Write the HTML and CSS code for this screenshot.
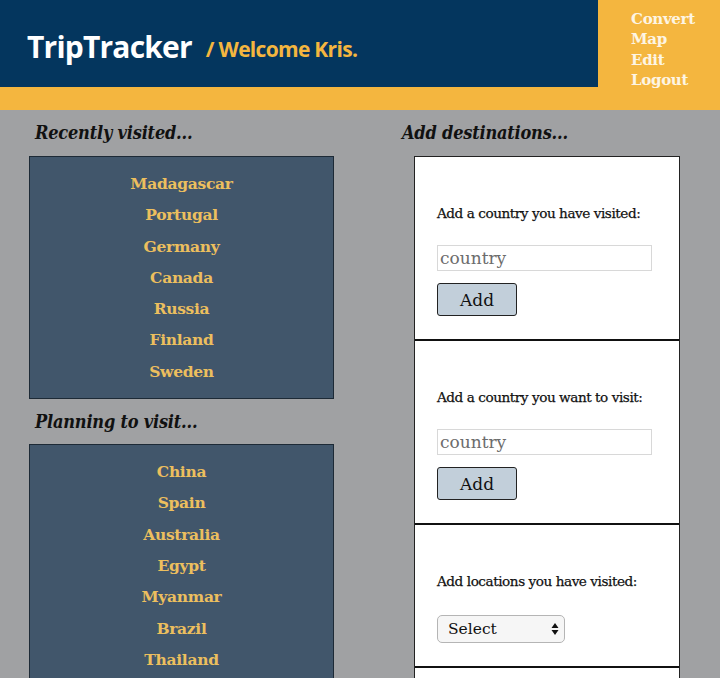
FILE: index.html
```html
<!DOCTYPE html>
<html lang="en">
<head>
<meta charset="utf-8">
<title>TripTracker</title>
<link rel="stylesheet" href="styles.css">
</head>
<body>
<header class="header">
  <div class="brand-bar">
    <h1 class="logo">TripTracker</h1>
    <span class="welcome">/ Welcome Kris.</span>
  </div>
  <nav class="nav">
    <a href="#">Convert</a>
    <a href="#">Map</a>
    <a href="#">Edit</a>
    <a href="#">Logout</a>
  </nav>
</header>
<main class="main">
  <section class="col-left">
    <h2 class="heading">Recently visited...</h2>
    <ul class="country-list">
      <li>Madagascar</li>
      <li>Portugal</li>
      <li>Germany</li>
      <li>Canada</li>
      <li>Russia</li>
      <li>Finland</li>
      <li>Sweden</li>
    </ul>
    <h2 class="heading">Planning to visit...</h2>
    <ul class="country-list">
      <li>China</li>
      <li>Spain</li>
      <li>Australia</li>
      <li>Egypt</li>
      <li>Myanmar</li>
      <li>Brazil</li>
      <li>Thailand</li>
    </ul>
  </section>
  <section class="col-right">
    <h2 class="heading">Add destinations...</h2>
    <div class="form-box">
      <form class="form-section">
        <label class="form-label">Add a country you have visited:</label>
        <input class="text-input" type="text" placeholder="country">
        <button class="add-btn" type="button">Add</button>
      </form>
      <form class="form-section">
        <label class="form-label">Add a country you want to visit:</label>
        <input class="text-input" type="text" placeholder="country">
        <button class="add-btn" type="button">Add</button>
      </form>
      <form class="form-section">
        <label class="form-label">Add locations you have visited:</label>
        <div class="select">
          <span>Select</span>
          <svg class="select-arrows" width="8" height="14" viewBox="0 0 8 14"><path d="M4 1 L7.5 6 H0.5 Z M4 13 L7.5 8 H0.5 Z" fill="#111"/></svg>
        </div>
      </form>
      <div class="form-section form-section-empty"></div>
    </div>
  </section>
</main>
</body>
</html>
```
FILE: styles.css
```css
* { box-sizing: border-box; }
html, body { margin: 0; padding: 0; }
body {
  background: #a0a1a3;
  font-family: "DejaVu Serif", serif;
  width: 720px;
  height: 678px;
  overflow: hidden;
}
.header {
  display: flex;
  height: 110px;
  background: #f4b63f;
}
.brand-bar {
  width: 598px;
  height: 87px;
  background: #04365e;
  display: flex;
  align-items: center;
  padding-left: 27px;
  padding-top: 6px;
}
.logo {
  margin: 0;
  font-family: "Open Sans", sans-serif;
  font-weight: 700;
  font-size: 30px;
  letter-spacing: -0.8px;
  color: #ffffff;
}
.welcome {
  margin-left: 14px;
  margin-top: 4px;
  font-family: "Open Sans", sans-serif;
  font-weight: 700;
  font-size: 21px;
  letter-spacing: -0.7px;
  color: #f4b63f;
}
.nav {
  display: flex;
  flex-direction: column;
  padding: 9px 0 0 33px;
}
.nav a {
  font-family: "DejaVu Serif", serif;
  font-weight: 700;
  font-size: 15px;
  line-height: 20.3px;
  color: #fdf5e4;
  text-decoration: none;
  letter-spacing: -0.3px;
}
.main {
  display: flex;
  padding-left: 29px;
}
.col-left {
  width: 305px;
  display: flex;
  flex-direction: column;
}
.heading {
  margin: 0;
  font-family: "DejaVu Serif Condensed", "DejaVu Serif", serif;
  font-style: italic;
  font-weight: 700;
  font-size: 18px;
  line-height: 46px;
  color: #111;
  letter-spacing: -0.2px;
}
.col-left .heading { padding-left: 6px; }
.col-left .country-list + .heading { line-height: 45px; }
.country-list {
  list-style: none;
  margin: 0;
  padding: 11px 0 11px;
  background: #41566b;
  border: 1px solid #1d2a36;
  text-align: center;
}
.country-list li {
  font-family: "DejaVu Serif", serif;
  font-weight: 700;
  font-size: 15.5px;
  line-height: 31.3px;
  color: #ecbf5e;
  letter-spacing: -0.3px;
}
.col-right {
  margin-left: 67px;
  width: 300px;
  display: flex;
  flex-direction: column;
}
.col-right .heading { margin-left: 1px; }
.form-box {
  margin-left: 13px;
  width: 266px;
  background: #fff;
  border: 1px solid #222;
  border-bottom: none;
}
.form-section {
  display: flex;
  flex-direction: column;
  align-items: flex-start;
  padding: 46px 22px 23px;
  border-bottom: 2px solid #111;
  margin: 0;
}
.form-section-empty { height: 60px; }
.form-label {
  font-family: "DejaVu Serif", serif;
  font-size: 13.6px;
  line-height: 20px;
  color: #111;
  letter-spacing: -0.45px;
  -webkit-text-stroke: 0.25px #111;
}
.text-input {
  margin-top: 22px;
  width: 215px;
  height: 26px;
  border: 1px solid #d8d8d8;
  padding: 0 2px;
  font-family: "DejaVu Serif", serif;
  font-size: 17px;
  color: #333;
  outline: none;
}
.text-input::placeholder { color: #6c6c6c; }
.add-btn {
  margin-top: 12px;
  width: 80px;
  height: 33px;
  background: #c2cfda;
  border: 1px solid #222;
  border-radius: 3px;
  font-family: "DejaVu Serif", serif;
  font-size: 17px;
  color: #111;
  padding: 0;
}
.select {
  margin-top: 24px;
  width: 128px;
  height: 28px;
  background: #f6f6f6;
  border: 1px solid #b5b5b5;
  border-radius: 5px;
  display: flex;
  align-items: center;
  justify-content: space-between;
  padding: 0 5px 0 10px;
  font-family: "DejaVu Serif", serif;
  font-size: 15.5px;
  color: #111;
}
```
